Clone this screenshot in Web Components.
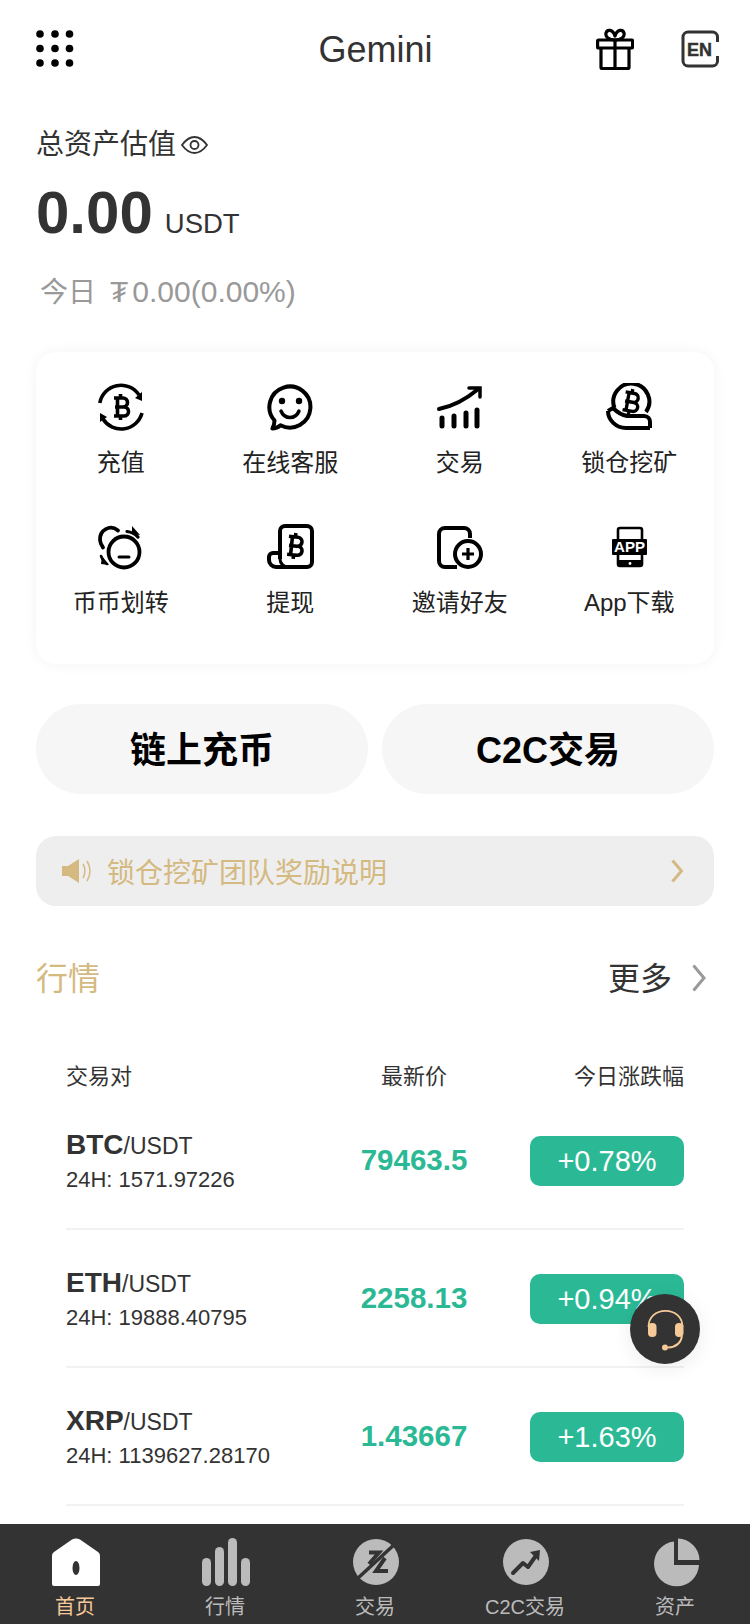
<!DOCTYPE html>
<html lang="zh">
<head>
<meta charset="utf-8">
<title>Gemini</title>
<style>
  html, body { margin: 0; padding: 0; background: #fff; }
  body { font-family: "Liberation Sans", "Noto Sans CJK SC", sans-serif; color: #333; }
</style>
</head>
<body>
<app-shell>
  <top-bar></top-bar>
  <asset-summary></asset-summary>
  <action-grid>
    <action-item icon="recharge">充值</action-item>
    <action-item icon="service">在线客服</action-item>
    <action-item icon="trade">交易</action-item>
    <action-item icon="mining">锁仓挖矿</action-item>
    <action-item icon="transfer">币币划转</action-item>
    <action-item icon="withdraw">提现</action-item>
    <action-item icon="invite">邀请好友</action-item>
    <action-item icon="app">App下载</action-item>
  </action-grid>
  <quick-buttons></quick-buttons>
  <notice-bar>锁仓挖矿团队奖励说明</notice-bar>
  <market-header></market-header>
  <market-table>
    <market-row pair="BTC" volume="1571.97226" price="79463.5" change="+0.78%"></market-row>
    <market-row pair="ETH" volume="19888.40795" price="2258.13" change="+0.94%"></market-row>
    <market-row pair="XRP" volume="1139627.28170" price="1.43667" change="+1.63%"></market-row>
  </market-table>
  <float-support slot="overlay"></float-support>
  <tab-bar slot="tabs">
    <tab-item icon="home" active>首页</tab-item>
    <tab-item icon="market">行情</tab-item>
    <tab-item icon="exchange">交易</tab-item>
    <tab-item icon="c2c">C2C交易</tab-item>
    <tab-item icon="assets">资产</tab-item>
  </tab-bar>
</app-shell>

<script>
// stroked bitcoin sign, used by a few of the action icons
const coinB = (transform, w = 3.6) => `<g transform="${transform}" fill="none" stroke="#000" stroke-width="${w}">
  <path d="M-7-9H2a4.500 4.500 0 0 1 0 9H-6M-3 0H3a4.500 4.500 0 0 1 0 9H-7M-3.500-9V9M-.5-13V-9M-.5 9V13"/></g>`;

const ACTION_ICONS = {
  recharge: `<g fill="none" stroke="#000" stroke-width="3.600">
      <path d="M2.800 20A21.500 21.500 0 0 1 42 12"/><path d="M45 30A21.500 21.500 0 0 1 6 36"/>
    </g>
    <path d="M45 9v9l-7-3zM3 39V30l7 4z" fill="#000"/>${coinB("translate(24 24)")}`,
  service: `<path d="M14.500 42.200A20.500 20.500 0 1 0 8.500 37.500c0 3-1 6-2 8 3 0 6-1.500 8-3.300z" fill="none" stroke="#000" stroke-width="4" stroke-linejoin="round"/>
    <circle cx="16" cy="18" r="3.200"/><circle cx="33" cy="18" r="3.200"/>
    <path d="M15 28c2 5 5 6.500 9 6.500s7-1.500 9-6.500" fill="none" stroke="#000" stroke-width="3.500" stroke-linecap="round"/>`,
  trade: `<g fill="none" stroke="#000" stroke-linecap="round">
      <path d="M3 26Q23 22 41 7" stroke-width="4"/>
      <path d="M33 5H44V14" stroke-width="3.500"/>
      <path d="M6 35V43M18 33V43M30 30V43M41 27V43" stroke-width="5"/>
    </g>`,
  mining: `<g fill="none" stroke="#000" stroke-width="4" stroke-linejoin="round">
      <path d="M9.500 25A18 18 0 1 1 41 29"/>
      <path d="M3 28l5-3c4 4 8 7 14 8h14"/>
      <path d="M45 45H21C11 45 3 37 3 28"/>
      <path d="M45 45v-6c0-3-2-6-6-6H30"/>
    </g>${coinB("translate(26 19) rotate(10)", 3.400)}`,
  transfer: `<g fill="none" stroke="#000" stroke-linecap="round">
      <circle cx="27" cy="29" r="15.500" stroke-width="3.800"/>
      <path d="M21 7.500C13 1 2.500 7 3 17c.2 3 1.500 5.500 3 7.500" stroke-width="3.800"/>
      <path d="M30 8.500c4 .5 8 2.500 11 5.500" stroke-width="3.200"/>
      <path d="M4 33c1 3 3 6 6 8" stroke-width="2.500"/>
      <path d="M22 34h10" stroke-width="3"/>
    </g>
    <path d="M35 3l8 9-8-1zM4 41l1-8 7 9z" fill="#000"/>`,
  withdraw: `<path d="M14 36V8a5 5 0 0 1 5-5h22a5 5 0 0 1 5 5v31a5 5 0 0 1-5 5H10a7 7 0 0 1-7-7v-3a4 4 0 0 1 4-4h7" fill="none" stroke="#000" stroke-width="4" stroke-linejoin="round"/>
    <path d="M14 36a8 8 0 0 0 8 8" fill="none" stroke="#000" stroke-width="3"/>${coinB("translate(29 23) rotate(6)")}`,
  invite: `<g fill="none" stroke="#000">
      <path d="M34 15V11a6 6 0 0 0-6-6H9a6 6 0 0 0-6 6v27a6 6 0 0 0 6 6h12" stroke-width="4"/>
      <circle cx="32" cy="31" r="13" stroke-width="4"/>
      <path d="M32 25v12M26 31h12" stroke-width="3.200"/>
    </g>`,
  app: `<rect x="13" y="5" width="24" height="38" rx="2" fill="none" stroke="#000" stroke-width="2.600"/>
    <rect x="7" y="16" width="35" height="16" rx="1"/>
    <rect x="13" y="37" width="24" height="6.500"/><circle cx="25" cy="40.500" r="1.400" fill="#fff"/>
    <text x="9" y="28.500" font-family="Liberation Sans" font-weight="700" font-size="14" fill="#fff" textLength="31" lengthAdjust="spacingAndGlyphs">APP</text>`
};

const TAB_ICONS = {
  home: `<path d="M20 1.500Q24-.5 28 1.500L46 14Q48 15 48 18V46Q48 48 46 48H2Q0 48 0 46V18Q0 15 2 14Z" fill="#fff"/>
    <ellipse cx="24" cy="30" rx="3.500" ry="7" fill="#333"/>`,
  market: `<g fill="#bbb"><rect x="0" y="20" width="9" height="28" rx="4.500"/><rect x="13" y="9" width="9" height="39" rx="4.500"/>
    <rect x="26" y="0" width="9" height="48" rx="4.500"/><rect x="39" y="20" width="9" height="28" rx="4.500"/></g>`,
  exchange: `<circle cx="24" cy="24" r="23" fill="#bbb"/>
    <g fill="none" stroke="#333" stroke-width="4"><path d="M5 41L44 5" stroke-width="3.500"/><path d="M17 14.500H27L17 26"/><path d="M33 20L24 33H36"/></g>`,
  c2c: `<circle cx="24" cy="24" r="23" fill="#bbb"/>
    <path d="M11 35L21 25L26 29L33 19" fill="none" stroke="#333" stroke-width="4" stroke-linecap="round" stroke-linejoin="round"/>
    <path d="M28 14L38 12L37 23Z" fill="#333"/>`,
  assets: `<g fill="#bbb"><path d="M22 3.500A22.500 22.500 0 1 0 47 27H22Z"/><path d="M26 .5A22 22 0 0 1 47.500 22H26Z"/></g>`
};

// every element: shadow root + static markup, nothing fancy
class BaseEl extends HTMLElement {
  constructor() {
    super();
    this.attachShadow({ mode: "open" });
  }
  connectedCallback() {
    this.shadowRoot.innerHTML = this.markup();
  }
}

class AppShell extends BaseEl {
  markup() {
    return `<style>
      :host { display: block; width: 750px; height: 1624px; position: relative; overflow: hidden; background: #fff; }
      .wrap { display: flex; flex-direction: column; height: 100%; }
      main { flex: 1; min-height: 0; overflow: hidden; }
    </style>
    <div class="wrap"><main><slot></slot></main><slot name="tabs"></slot></div>
    <slot name="overlay"></slot>`;
  }
}

class TopBar extends BaseEl {
  markup() {
    return `<style>
      :host { display: grid; grid-template-columns: 1fr auto 1fr; align-items: center; height: 98px; padding: 0 31px 0 36px; box-sizing: border-box; }
      h1 { margin: 0 4px 0 0; font-size: 36px; font-weight: 400; color: #333; line-height: 44px; position: relative; top: 1px; }
      .dots { display: block; }
      .right { display: flex; justify-self: end; align-items: center; gap: 47px; }
      svg { display: block; }
    </style>
    <svg class="dots" width="38" height="38" viewBox="0 0 38 38" fill="#000">
      <circle cx="4" cy="4" r="3.800"/><circle cx="19" cy="4" r="3.800"/><circle cx="33.500" cy="4" r="3.800"/>
      <circle cx="4" cy="18.500" r="3.800"/><circle cx="19" cy="18.500" r="3.800"/><circle cx="33.500" cy="18.500" r="3.800"/>
      <circle cx="4" cy="33" r="3.800"/><circle cx="19" cy="33" r="3.800"/><circle cx="33.500" cy="33" r="3.800"/>
    </svg>
    <h1>Gemini</h1>
    <div class="right">
      <svg width="38" height="42" viewBox="0 0 38 42" fill="none" stroke="#000" stroke-width="3.200" stroke-linejoin="round">
        <rect x="1.600" y="12" width="35" height="8" rx="1"/>
        <path d="M5 20V39.500a1 1 0 0 0 1 1H32a1 1 0 0 0 1-1V20M19 12V40.500"/>
        <path d="M19 12C13 12 9 9 10 5C11 1 17 1 19 8C21 1 27 1 28 5C29 9 25 12 19 12Z"/>
      </svg>
      <svg width="38" height="38" viewBox="0 0 38 38" fill="none">
        <path d="M36.500 12V7a5 5 0 0 0-5-5H7a5 5 0 0 0-5 5V31a5 5 0 0 0 5 5H31.500a5 5 0 0 0 5-5V26" stroke="#333" stroke-width="3"/>
        <text x="6" y="26" font-family="Liberation Sans" font-weight="700" font-size="19" fill="#333" stroke="#333" stroke-width=".5" textLength="25" lengthAdjust="spacingAndGlyphs">EN</text>
      </svg>
    </div>`;
  }
}

class AssetSummary extends BaseEl {
  markup() {
    return `<style>
      :host { display: block; padding: 27px 36px 0; height: 254px; box-sizing: border-box; }
      .label { display: flex; align-items: center; gap: 5px; height: 40px; font-size: 28px; line-height: 40px; color: #333; }
      .amount { display: flex; align-items: baseline; height: 70px; margin-top: 13px; line-height: 70px; white-space: nowrap; }
      .amount b { font-size: 60px; font-weight: 700; color: #333; }
      .amount span { font-size: 27.500px; margin-left: 12px; color: #333; }
      .today { height: 40px; margin-top: 24px; margin-left: 4px; font-size: 28px; line-height: 40px; color: #999; white-space: nowrap; }
      .today span { margin-left: 14px; font-size: 30px; }
      .today i { font-style: normal; margin-right: 4px; }
    </style>
    <div class="label">总资产估值
      <svg width="27" height="18" viewBox="0 0 27 18" fill="none" stroke="#333" stroke-width="1.800">
        <path d="M1 9C5 3.500 9 1 13.500 1S22 3.500 26 9C22 14.500 18 17 13.500 17S5 14.500 1 9Z"/><circle cx="13.500" cy="9" r="4"/>
      </svg>
    </div>
    <div class="amount"><b>0.00</b><span>USDT</span></div>
    <div class="today">今日<span><i>₮</i>0.00(0.00%)</span></div>`;
  }
}

class ActionGrid extends BaseEl {
  markup() {
    return `<style>
      :host { display: grid; grid-template-columns: repeat(4, 1fr); row-gap: 43px; width: 678px; height: 312px; box-sizing: border-box;
        margin-left: 36px; padding: 31px 0 0; background: #fff; border-radius: 20px; box-shadow: 0 0 14px rgba(0,0,0,.05); align-content: start; }
    </style><slot></slot>`;
  }
}

class ActionItem extends BaseEl {
  markup() {
    return `<style>
      :host { display: flex; flex-direction: column; align-items: center; }
      svg { display: block; margin-bottom: 15px; }
      span { font-size: 24px; line-height: 34px; color: #222; white-space: nowrap; }
    </style>
    <svg width="48" height="48" viewBox="0 0 48 48">${ACTION_ICONS[this.getAttribute("icon")]}</svg>
    <span><slot></slot></span>`;
  }
}

class QuickButtons extends BaseEl {
  markup() {
    return `<style>
      :host { display: flex; gap: 14px; margin: 40px 36px 0; }
      div { flex: 1; height: 90px; box-sizing: border-box; padding-bottom: 5px; border-radius: 45px; background: #f6f6f6; display: flex; align-items: center; justify-content: center;
        font-size: 36px; font-weight: 700; color: #000; }
    </style>
    <div>链上充币</div><div>C2C交易</div>`;
  }
}

class NoticeBar extends BaseEl {
  markup() {
    return `<style>
      :host { display: flex; align-items: center; height: 70px; margin: 42px 36px 0; padding: 0 31px 0 26px; background: #eee; border-radius: 20px;
        color: #d4b981; font-size: 28px; }
      svg { display: block; flex: none; }
      span { flex: 1; margin-left: 15px; white-space: nowrap; }
    </style>
    <svg width="30" height="26" viewBox="0 0 30 26" fill="none">
      <path d="M0 8H6L17 1V25L6 18H0Z" fill="#d4b981"/>
      <path d="M21 6C23.500 10 23.500 16 21 20M25 3C29 9 29 17 25 23" stroke="#d4b981" stroke-width="1.500"/>
    </svg>
    <span><slot></slot></span>
    <svg width="12" height="24" viewBox="0 0 12 24" fill="none"><path d="M1.500 1.500L10.500 12L1.500 22.500" stroke="#d4b981" stroke-width="3"/></svg>`;
  }
}

class MarketHeader extends BaseEl {
  markup() {
    return `<style>
      :host { display: flex; align-items: center; justify-content: space-between; height: 44px; margin: 48px 44px 0 36px; font-size: 32px; }
      .t { color: #d4b981; }
      .more { display: flex; align-items: center; gap: 20px; color: #333; }
      svg { display: block; position: relative; top: 2px; }
    </style>
    <div class="t">行情</div>
    <div class="more">更多
      <svg width="14" height="28" viewBox="0 0 14 28" fill="none"><path d="M1.500 1.500L12 14L1.500 26.500" stroke="#999" stroke-width="3"/></svg>
    </div>`;
  }
}

class MarketTable extends BaseEl {
  markup() {
    return `<style>
      :host { display: block; margin: 64px 66px 0; }
      .head { display: grid; grid-template-columns: 264px 168px 1fr; height: 30px; line-height: 30px; font-size: 22px; color: #333; }
      .head div:nth-child(2) { text-align: center; }
      .head div:nth-child(3) { text-align: right; }
    </style>
    <div class="head"><div>交易对</div><div>最新价</div><div>今日涨跌幅</div></div>
    <slot></slot>`;
  }
}

class MarketRow extends BaseEl {
  markup() {
    const a = n => this.getAttribute(n);
    return `<style>
      :host { display: grid; grid-template-columns: 264px 168px 1fr; align-items: center; height: 138px; box-sizing: border-box; border-bottom: 2px solid #f2f2f2; }
      .left { padding-top: 2px; }
      .name { line-height: 36px; color: #333; white-space: nowrap; }
      .name b { font-size: 28px; }
      .name span { font-size: 23px; }
      .vol { margin-top: -2px; font-size: 22px; line-height: 30px; color: #333; white-space: nowrap; }
      .price { text-align: center; font-size: 29.500px; font-weight: 700; color: #2bb995; }
      .pill { justify-self: end; width: 154px; height: 50px; margin-top: 2px; border-radius: 10px; background: #2bb995; color: #fff; font-size: 29px;
        display: flex; align-items: center; justify-content: center; }
    </style>
    <div class="left"><div class="name"><b>${a("pair")}</b><span>/USDT</span></div><div class="vol">24H: ${a("volume")}</div></div>
    <div class="price">${a("price")}</div>
    <div class="pill">${a("change")}</div>`;
  }
}

class FloatSupport extends BaseEl {
  markup() {
    return `<style>
      :host { position: absolute; left: 630px; top: 1294px; width: 70px; height: 70px; border-radius: 50%; background: #333;
        box-shadow: 0 4px 20px rgba(0,0,0,.08); display: block; }
      svg { display: block; }
    </style>
    <svg width="70" height="70" viewBox="0 0 70 70" fill="none" stroke="#f6c998">
      <path d="M18.500 33C18.500 23 26 16.800 35.500 16.800S52.500 23 52.500 33" stroke-width="1.800"/>
      <rect x="18" y="29" width="8.500" height="14" rx="4" fill="#f6c998" stroke="none"/>
      <rect x="45" y="29" width="8.500" height="14" rx="4" fill="#f6c998" stroke="none"/>
      <path d="M52 42C51 49 46 53 38 53.500" stroke-width="1.800"/>
      <circle cx="35" cy="53.500" r="3" fill="#f6c998" stroke="none"/>
    </svg>`;
  }
}

class TabBar extends BaseEl {
  markup() {
    return `<style>
      :host { display: grid; grid-template-columns: repeat(5, 150px); height: 100px; background: #333; flex: none; }
    </style><slot></slot>`;
  }
}

class TabItem extends BaseEl {
  markup() {
    const on = this.hasAttribute("active");
    return `<style>
      :host { display: flex; flex-direction: column; align-items: center; padding-top: 14px; box-sizing: border-box; }
      svg { display: block; overflow: visible; margin-bottom: 7px; position: relative; left: 1px; }
      span { font-size: 20px; line-height: 28px; color: ${on ? "#f6c998" : "#bbb"}; white-space: nowrap; }
    </style>
    <svg width="48" height="48" viewBox="0 0 48 48">${TAB_ICONS[this.getAttribute("icon")]}</svg>
    <span><slot></slot></span>`;
  }
}

customElements.define("app-shell", AppShell);
customElements.define("top-bar", TopBar);
customElements.define("asset-summary", AssetSummary);
customElements.define("action-grid", ActionGrid);
customElements.define("action-item", ActionItem);
customElements.define("quick-buttons", QuickButtons);
customElements.define("notice-bar", NoticeBar);
customElements.define("market-header", MarketHeader);
customElements.define("market-table", MarketTable);
customElements.define("market-row", MarketRow);
customElements.define("float-support", FloatSupport);
customElements.define("tab-bar", TabBar);
customElements.define("tab-item", TabItem);
</script>
</body>
</html>
